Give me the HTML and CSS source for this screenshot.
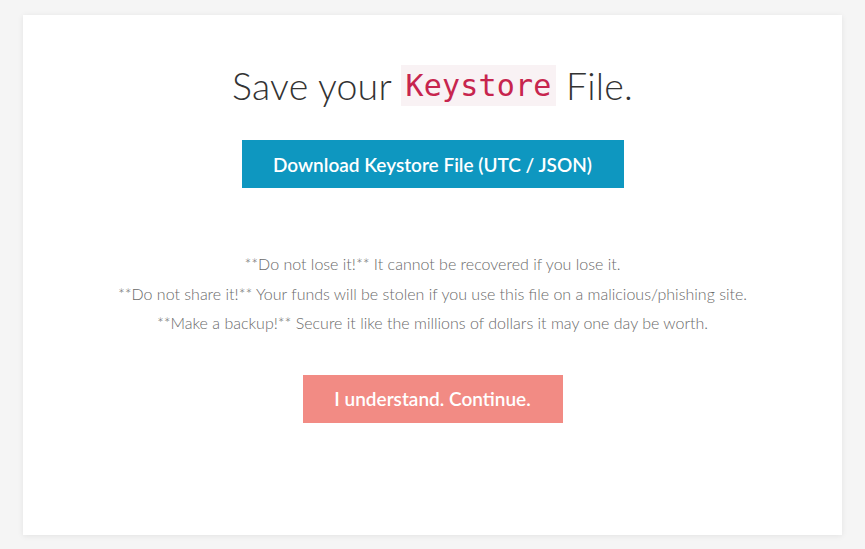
FILE: index.html
```html
<!DOCTYPE html>
<html>
<head>
<meta charset="utf-8">
<link rel="stylesheet" href="styles.css">
</head>
<body>
<main class="card">
  <h1 class="title">Save your <code class="code">Keystore</code> File.</h1>
  <button class="btn btn-primary">Download Keystore File (UTC / JSON)</button>
  <div class="warnings">
    <p>**Do not lose it!** It cannot be recovered if you lose it.</p>
    <p>**Do not share it!** Your funds will be stolen if you use this file on a malicious/phishing site.</p>
    <p>**Make a backup!** Secure it like the millions of dollars it may one day be worth.</p>
  </div>
  <button class="btn btn-danger">I understand. Continue.</button>
</main>
</body>
</html>
```
FILE: styles.css
```css
html, body {
  margin: 0;
  padding: 0;
}
body {
  background: #f5f5f5;
  font-family: Lato, "Open Sans", sans-serif;
  padding: 15px 23px 14px 23px;
  box-sizing: border-box;
  height: 549px;
}
.card {
  background: #fff;
  height: 520px;
  box-shadow: 0 1px 6px rgba(0,0,0,0.08);
  display: flex;
  flex-direction: column;
  align-items: center;
  box-sizing: border-box;
  padding-top: 50px;
}
.title {
  margin: 0;
  font-weight: 300;
  font-size: 37.5px;
  line-height: 41px;
  height: 41px;
  color: #333;
  letter-spacing: 0.2px;
}
.code {
  font-family: "DejaVu Sans Mono", "Liberation Mono", monospace;
  font-size: 30px;
  color: #c7254e;
  background: #f9f2f4;
  padding: 0 4px;
  line-height: 41px;
  height: 41px;
  display: inline-block;
  vertical-align: top;
}
.btn {
  border: 0;
  color: #fff;
  font-family: Lato, sans-serif;
  font-weight: 600;
  font-size: 19px;
  height: 48px;
  padding: 0;
  cursor: pointer;
}
.btn-primary {
  background: #0e97c0;
  margin-top: 34px;
  width: 382px;
}
.btn-danger {
  background: #f28b84;
  width: 260px;
  margin-top: 37px;
}
.warnings {
  margin-top: 61px;
  text-align: center;
  color: #6a6a6a;
  font-weight: 300;
  font-size: 16px;
}
.warnings p {
  margin: 0;
  line-height: 29.5px;
}
```
